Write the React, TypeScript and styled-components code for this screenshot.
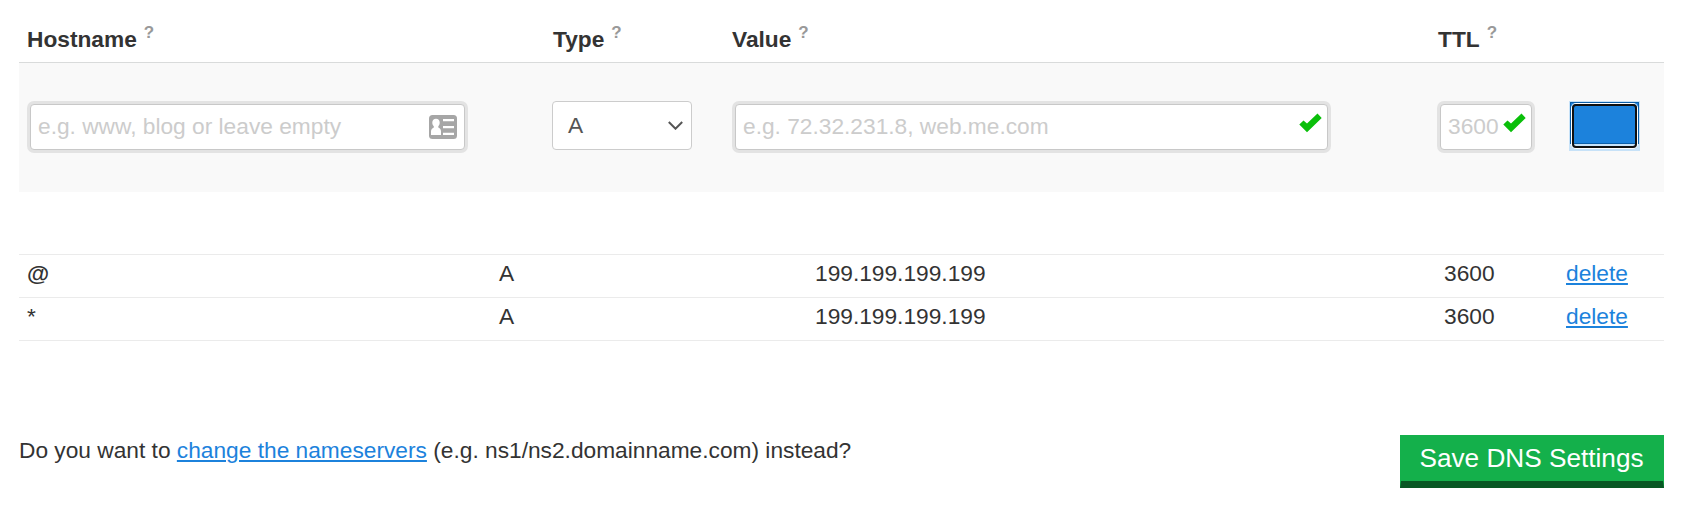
import React from "react";
import styled, { createGlobalStyle } from "styled-components";

const GlobalStyle = createGlobalStyle`
  *, *::before, *::after { box-sizing: border-box; }
  body {
    margin: 0;
    background: #fff;
    color: #333;
    font: 22.72px/28px "Liberation Sans", Arial, sans-serif;
  }
`;

const Page = styled.main`
  width: 1645px;
  margin-left: 19px;
`;

const HeaderRow = styled.div`
  display: grid;
  grid-template-columns: 526px 179px 706px 1fr;
  height: 63px;
  padding: 25px 0 0 8px;
  border-bottom: 1px solid #d9dbdb;
  font-weight: 700;
`;

const HeaderCell = styled.div`
  display: flex;
  align-items: flex-start;
  gap: 7px;
`;

const Help = styled.span`
  margin-top: -6px;
  color: #999;
  font-size: 17px;
`;

const FormRow = styled.form`
  display: flex;
  align-items: flex-start;
  height: 129px;
  padding: 38px 0 0 8px;
  background: #f9f9f9;
`;

const Field = styled.label<{ $width: number; $after: number }>`
  display: flex;
  align-items: center;
  width: ${(p) => p.$width}px;
  height: 46px;
  margin: 3px ${(p) => p.$after + 3}px 3px 3px;
  padding: 0 7px;
  border: 1px solid #c8c8c8;
  border-radius: 4px;
  background: #fff;
  box-shadow: 0 0 0 3px #e3e3e3;
`;

const Input = styled.input`
  flex: 1;
  min-width: 0;
  height: 30px;
  padding: 0 0 2px;
  border: 0;
  outline: 0;
  background: none;
  font: inherit;
  color: #333;
  &::placeholder { color: #ccc; opacity: 1; }
`;

const SelectBox = styled.div`
  display: flex;
  align-items: center;
  justify-content: space-between;
  width: 140px;
  height: 49px;
  margin-right: 40px;
  padding: 0 8px 1px 15px;
  border: 1px solid #ccc;
  border-radius: 4px;
  background: #fff;
  color: #555;
`;

const AddButton = styled.button`
  position: relative;
  width: 71px;
  height: 50px;
  margin-left: 34px;
  padding: 1px 1px 7px;
  border: 0;
  background: #c7e2f8;
  &::after {
    content: "";
    position: absolute;
    inset: 3px;
    border: 2px solid #101010;
    border-radius: 4px;
    box-shadow: 0 0 0 1px #fff;
  }
`;

const AddFace = styled.span`
  display: block;
  height: 42px;
  border: 1px solid #0b5ea8;
  background: #1c82dc;
`;

const Records = styled.div`
  margin-top: 62px;
  border-top: 1px solid #ebebeb;
`;

const Record = styled.div`
  display: grid;
  grid-template-columns: 472px 316px 629px 122px 1fr;
  height: 43px;
  padding: 4px 0 0 8px;
  border-bottom: 1px solid #ebebeb;
`;

const Host = styled.span<{ $wildcard: boolean }>`
  font-weight: ${(p) => (p.$wildcard ? 400 : 700)};
`;

const Link = styled.a`
  color: #1c82dc;
  text-decoration: underline;
  text-decoration-thickness: 2px;
  text-underline-offset: 2px;
`;

const Footer = styled.footer`
  display: flex;
  justify-content: space-between;
  align-items: flex-start;
  padding-top: 94px;
`;

const Question = styled.p`
  margin: 1px 0 0;
`;

const SaveButton = styled.button`
  width: 264px;
  height: 53px;
  padding: 0 1px 0 0;
  border: 1px solid #14b04b;
  border-top-width: 0;
  border-bottom: 7px solid #085724;
  background: #14b04b;
  color: #fff;
  font: 26.2px/30px "Liberation Sans", Arial, sans-serif;
  white-space: nowrap;
`;

const CheckSvg = styled.svg`
  flex: none;
  margin: -8px -2px 0 0;
`;

const CardSvg = styled.svg`
  flex: none;
`;

const Check = () => (
  <CheckSvg width="23" height="20" viewBox="0 0 23 20">
    <path d="M.3 11.500 4.500 7.500 8 10.500 18.500.6 22.700 5 8 19.300Z" fill="#0abf0a" />
  </CheckSvg>
);

const ContactCard = () => (
  <CardSvg width="28" height="24" viewBox="0 0 28 24">
    <rect width="28" height="24" rx="3.5" fill="#a6a6a6" />
    <path
      d="M7 3.800c2.300 0 3.700 1.500 3.700 3.800 0 1.700-.6 2.800-1.400 3.600v1.400c1.900.8 2.700 2 2.700 4V20H2v-3.400c0-2 1.100-3.200 2.800-4v-1.400c-.9-.8-1.500-1.900-1.500-3.600C3.300 5.300 4.800 3.800 7 3.800Z"
      fill="#fff"
    />
    <path d="M14 4h11v2.300H14zM14 11h11v2.300H14zM14 17.700h11V20H14z" fill="#fff" />
  </CardSvg>
);

const Chevron = () => (
  <svg width="15" height="9" viewBox="0 0 15 9" fill="none">
    <path d="m.8 1 6.700 6.700L14.200 1" stroke="#555" strokeWidth="2" />
  </svg>
);

const headings = ["Hostname", "Type", "Value", "TTL"];
const records = [
  { host: "@", type: "A", value: "199.199.199.199", ttl: "3600" },
  { host: "*", type: "A", value: "199.199.199.199", ttl: "3600" },
];

export default function App() {
  return (
    <>
      <GlobalStyle />
      <Page>
        <HeaderRow>
          {headings.map((h) => (
            <HeaderCell key={h}>
              {h}
              <Help>?</Help>
            </HeaderCell>
          ))}
        </HeaderRow>
        <FormRow>
          <Field $width={435} $after={84}>
            <Input placeholder="e.g. www, blog or leave empty" />
            <ContactCard />
          </Field>
          <SelectBox>
            A
            <Chevron />
          </SelectBox>
          <Field $width={593} $after={106}>
            <Input placeholder="e.g. 72.32.231.8, web.me.com" />
            <Check />
          </Field>
          <Field $width={92} $after={0}>
            <Input placeholder="3600" />
            <Check />
          </Field>
          <AddButton type="button" aria-label="Add">
            <AddFace />
          </AddButton>
        </FormRow>
        <Records>
          {records.map((r) => (
            <Record key={r.host}>
              <Host $wildcard={r.host === "*"}>{r.host}</Host>
              <span>{r.type}</span>
              <span>{r.value}</span>
              <span>{r.ttl}</span>
              <span>
                <Link>delete</Link>
              </span>
            </Record>
          ))}
        </Records>
        <Footer>
          <Question>
            Do you want to <Link>change the nameservers</Link> (e.g. ns1/ns2.domainname.com) instead?
          </Question>
          <SaveButton>Save DNS Settings</SaveButton>
        </Footer>
      </Page>
    </>
  );
}
